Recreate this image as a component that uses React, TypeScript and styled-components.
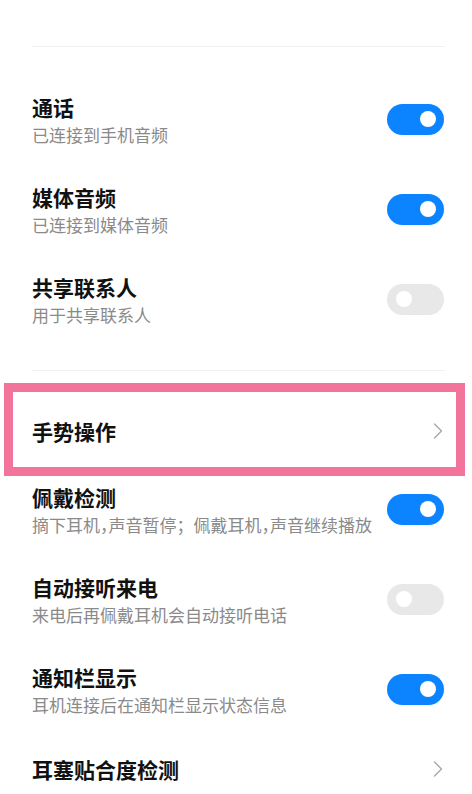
import React from "react";
import styled, { createGlobalStyle } from "styled-components";

const GlobalStyle = createGlobalStyle`
  html, body {
    margin: 0;
    padding: 0;
    background: #ffffff;
  }
  body {
    font-family: "Noto Sans CJK SC", "Noto Sans", sans-serif;
    -webkit-font-smoothing: antialiased;
  }
`;

const Page = styled.div`
  width: 472px;
  height: 794px;
  overflow: hidden;
  background: #ffffff;
  display: flex;
  flex-direction: column;
`;

const TopSpace = styled.div`
  height: 46px;
  flex: none;
`;

const Divider = styled.div`
  height: 1px;
  flex: none;
  margin: 0 27px 0 32px;
  background: #f0f0f0;
`;

const Section = styled.section<{ $top: number; $bottom: number }>`
  display: flex;
  flex-direction: column;
  padding-top: ${(p) => p.$top}px;
  padding-bottom: ${(p) => p.$bottom}px;
  flex: none;
`;

const Row = styled.div<{ $height: number }>`
  position: relative;
  height: ${(p) => p.$height}px;
  display: flex;
  align-items: center;
  justify-content: space-between;
  padding: 0 28px 0 32px;
  flex: none;
`;

const TextBlock = styled.div`
  display: flex;
  flex-direction: column;
  min-width: 0;
`;

const Title = styled.div`
  font-size: 21px;
  line-height: 30px;
  font-weight: 700;
  color: #111111;
  white-space: nowrap;
`;

const Subtitle = styled.div`
  font-size: 17px;
  line-height: 25px;
  color: #8a8a8a;
  white-space: nowrap;
`;

/* CJK comma set at half width, as the system font does */
const Comma = styled.span`
  font-feature-settings: "halt";
`;

const Track = styled.div<{ $on: boolean }>`
  position: relative;
  width: 57px;
  height: 31px;
  border-radius: 16px;
  flex: none;
  background: ${(p) => (p.$on ? "#0d84ff" : "#e8e8e8")};
`;

const Knob = styled.div<{ $on: boolean }>`
  position: absolute;
  top: 7.5px;
  width: 16px;
  height: 16px;
  border-radius: 50%;
  background: #ffffff;
  ${(p) => (p.$on ? "right: 8px;" : "left: 9px;")}
`;

const Chevron = styled.svg`
  width: 10px;
  height: 16px;
  flex: none;
  margin-right: 1px;
`;

const Highlight = styled.div`
  position: absolute;
  top: -15px;
  bottom: -12px;
  left: 4px;
  right: 7px;
  border: 9px solid #f2749a;
  pointer-events: none;
`;

const Toggle = ({ on }: { on: boolean }) => (
  <Track $on={on}>
    <Knob $on={on} />
  </Track>
);

const Arrow = () => (
  <Chevron viewBox="0 0 10 16">
    <path
      d="M1.5 1 L8.5 8 L1.5 15"
      fill="none"
      stroke="#a8a8a8"
      strokeWidth="1.4"
      strokeLinecap="round"
      strokeLinejoin="round"
    />
  </Chevron>
);

const renderDesc = (desc: string) =>
  desc.split("，").flatMap((part, i) =>
    i === 0 ? [part] : [<Comma key={i}>，</Comma>, part]
  );

type SwitchItem = { title: string; desc: string; on: boolean };

const SwitchRow = ({ title, desc, on }: SwitchItem) => (
  <Row $height={90}>
    <TextBlock>
      <Title>{title}</Title>
      <Subtitle>{renderDesc(desc)}</Subtitle>
    </TextBlock>
    <Toggle on={on} />
  </Row>
);

const connectionItems: SwitchItem[] = [
  { title: "通话", desc: "已连接到手机音频", on: true },
  { title: "媒体音频", desc: "已连接到媒体音频", on: true },
  { title: "共享联系人", desc: "用于共享联系人", on: false },
];

const featureItems: SwitchItem[] = [
  { title: "佩戴检测", desc: "摘下耳机，声音暂停；佩戴耳机，声音继续播放", on: true },
  { title: "自动接听来电", desc: "来电后再佩戴耳机会自动接听电话", on: false },
  { title: "通知栏显示", desc: "耳机连接后在通知栏显示状态信息", on: true },
];

export default function App() {
  return (
    <>
      <GlobalStyle />
      <Page>
        <TopSpace />
        <Divider />
        <Section $top={27} $bottom={26}>
          {connectionItems.map((item) => (
            <SwitchRow key={item.title} {...item} />
          ))}
        </Section>
        <Divider />
        <Section $top={27} $bottom={0}>
          <Row $height={66}>
            <Title>手势操作</Title>
            <Arrow />
            <Highlight />
          </Row>
          {featureItems.map((item) => (
            <SwitchRow key={item.title} {...item} />
          ))}
          <Row $height={70}>
            <Title>耳塞贴合度检测</Title>
            <Arrow />
          </Row>
        </Section>
      </Page>
    </>
  );
}
